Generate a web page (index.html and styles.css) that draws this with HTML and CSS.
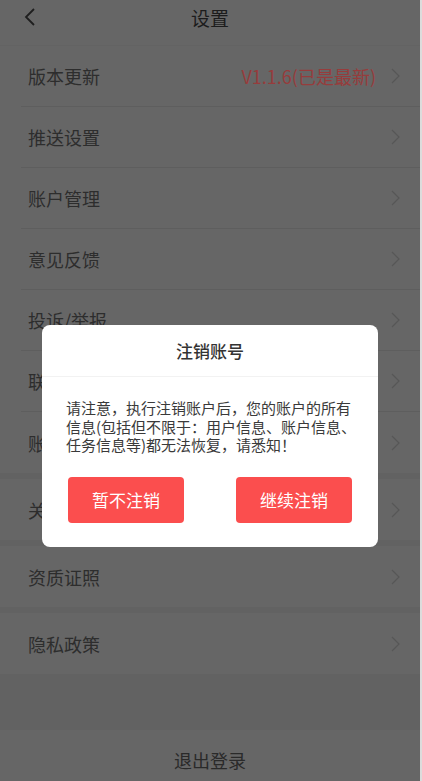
FILE: index.html
```html
<!DOCTYPE html>
<html lang="zh-CN">
<head>
<meta charset="utf-8">
<title>设置</title>
<link rel="stylesheet" href="styles.css">
</head>
<body>
<div class="app">
  <header class="header">
    <svg class="back" width="14" height="20" viewBox="0 0 14 20"><path d="M11 2 L3 10 L11 18" fill="none" stroke="#1e1e1e" stroke-width="1.8"/></svg>
    <h1 class="title">设置</h1>
  </header>

  <section class="group">
    <div class="row"><span class="label">版本更新</span><span class="value">V1.1.6(已是最新)</span><svg class="arrow" width="9" height="16" viewBox="0 0 9 16"><path d="M1 1 L8 8 L1 15" fill="none" stroke="#575757" stroke-width="1.2"/></svg></div>
    <div class="row"><span class="label">推送设置</span><svg class="arrow" width="9" height="16" viewBox="0 0 9 16"><path d="M1 1 L8 8 L1 15" fill="none" stroke="#575757" stroke-width="1.2"/></svg></div>
    <div class="row"><span class="label">账户管理</span><svg class="arrow" width="9" height="16" viewBox="0 0 9 16"><path d="M1 1 L8 8 L1 15" fill="none" stroke="#575757" stroke-width="1.2"/></svg></div>
    <div class="row"><span class="label">意见反馈</span><svg class="arrow" width="9" height="16" viewBox="0 0 9 16"><path d="M1 1 L8 8 L1 15" fill="none" stroke="#575757" stroke-width="1.2"/></svg></div>
    <div class="row"><span class="label">投诉/举报</span><svg class="arrow" width="9" height="16" viewBox="0 0 9 16"><path d="M1 1 L8 8 L1 15" fill="none" stroke="#575757" stroke-width="1.2"/></svg></div>
    <div class="row"><span class="label">联系我们</span><svg class="arrow" width="9" height="16" viewBox="0 0 9 16"><path d="M1 1 L8 8 L1 15" fill="none" stroke="#575757" stroke-width="1.2"/></svg></div>
    <div class="row last"><span class="label">账号注销</span><svg class="arrow" width="9" height="16" viewBox="0 0 9 16"><path d="M1 1 L8 8 L1 15" fill="none" stroke="#575757" stroke-width="1.2"/></svg></div>
  </section>

  <section class="group">
    <div class="row last"><span class="label">关于我们</span><svg class="arrow" width="9" height="16" viewBox="0 0 9 16"><path d="M1 1 L8 8 L1 15" fill="none" stroke="#575757" stroke-width="1.2"/></svg></div>
  </section>
  <section class="group">
    <div class="row last"><span class="label">资质证照</span><svg class="arrow" width="9" height="16" viewBox="0 0 9 16"><path d="M1 1 L8 8 L1 15" fill="none" stroke="#575757" stroke-width="1.2"/></svg></div>
  </section>
  <section class="group">
    <div class="row last"><span class="label">隐私政策</span><svg class="arrow" width="9" height="16" viewBox="0 0 9 16"><path d="M1 1 L8 8 L1 15" fill="none" stroke="#575757" stroke-width="1.2"/></svg></div>
  </section>

  <div class="spacer"></div>
  <footer class="footer">退出登录</footer>

  <div class="mask">
    <div class="dialog">
      <div class="dialog-title">注销账号</div>
      <p class="dialog-body">请注意，执行注销账户后，您的账户的所有信息(包括但不限于：用户信息、账户信息、任务信息等)都无法恢复，请悉知！</p>
      <div class="dialog-actions">
        <button class="btn">暂不注销</button>
        <button class="btn">继续注销</button>
      </div>
    </div>
  </div>
</div>
</body>
</html>
```

FILE: styles.css
```css
* { box-sizing: border-box; }
html {
  background: #dcdcdc;
}
body {
  margin: 0;
  font-family: "Noto Sans CJK SC", "Noto Sans", sans-serif;
  overflow: hidden;
  height: 781px;
}
.app {
  position: relative;
  width: 420px;
  height: 781px;
  background: #626262;
  display: flex;
  flex-direction: column;
  overflow: hidden;
}
.header {
  position: relative;
  height: 46px;
  background: #666666;
  border-bottom: 1px solid #636363;
  display: flex;
  justify-content: center;
  align-items: flex-start;
  flex-shrink: 0;
}
.back {
  position: absolute;
  left: 23px;
  top: 7px;
}
.title {
  margin: 0;
  font-size: 19px;
  font-weight: 400;
  line-height: 36px;
  color: #1c1c1c;
}
.group {
  background: #666666;
  margin-bottom: 6px;
  flex-shrink: 0;
}
.row {
  height: 61px;
  margin-left: 21px;
  padding: 0 20px 0 7px;
  border-bottom: 1px solid #5e5e5e;
  display: flex;
  align-items: center;
}
.row.last {
  border-bottom: none;
}
.label {
  flex: 1;
  font-size: 18px;
  color: #2d2d2d;
}
.value {
  font-size: 18px;
  color: #963c3c;
  margin-right: 15px;
}
.arrow {
  display: block;
}
.spacer {
  flex: 1;
}
.footer {
  height: 51px;
  flex-shrink: 0;
  background: #666666;
  text-align: center;
  font-size: 18px;
  line-height: 20px;
  padding-top: 20px;
  color: #2a2a2a;
}
.mask {
  position: absolute;
  inset: 0;
  display: flex;
  justify-content: center;
  align-items: flex-start;
  padding-top: 325px;
}
.dialog {
  width: 336px;
  background: #ffffff;
  border-radius: 8px;
  padding-bottom: 24px;
}
.dialog-title {
  height: 52px;
  border-bottom: 1px solid #f2f2f2;
  text-align: center;
  font-size: 17px;
  line-height: 52px;
  color: #333333;
  font-weight: 500;
}
.dialog-body {
  margin: 0;
  padding: 22px 14px 0 24px;
  font-size: 15px;
  line-height: 18.5px;
  color: #3a3a3a;
}
.dialog-actions {
  display: flex;
  justify-content: space-between;
  padding: 22px 26px 0;
}
.btn {
  width: 116px;
  height: 46px;
  border: none;
  border-radius: 4px;
  background: #fb4e4e;
  color: #ffffff;
  font-family: inherit;
  font-size: 17px;
  padding: 0;
}
```
